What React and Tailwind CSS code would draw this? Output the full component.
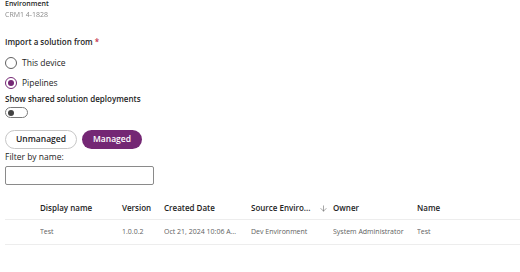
import { ArrowDown } from "lucide-react";

const cols = [
  { label: "Display name", w: "w-[82px]" },
  { label: "Version", w: "w-[42px]" },
  { label: "Created Date", w: "w-[87px]" },
  { label: "Source Enviro...", w: "w-[82px]", sort: true },
  { label: "Owner", w: "w-[84px]" },
  { label: "Name", w: "flex-1" },
];

const row = ["Test", "1.0.0.2", "Oct 21, 2024 10:06 A...", "Dev Environment", "System Administrator", "Test"];

function Radio({ checked, label }) {
  return (
    <div className="flex h-[20px] items-center gap-[5px]">
      <span
        className={
          "flex h-[12px] w-[12px] items-center justify-center rounded-full border " +
          (checked ? "border-[#742774]" : "border-[#616161]")
        }
      >
        {checked && <span className="h-[6px] w-[6px] rounded-full bg-[#742774]" />}
      </span>
      <span className="text-[8.5px] text-[#242424]">{label}</span>
    </div>
  );
}

export default function App() {
  return (
    <div className="h-[272px] w-[520px] overflow-hidden bg-white font-['Open_Sans',sans-serif] text-[#242424]">
      <div className="pl-[5px]">
        <div className="text-[7px] font-semibold leading-[8px]">Environment</div>
        <div className="mt-[2px] text-[7px] leading-[9px] text-[#8a8a8a] blur-[0.6px]">CRM1 4-1828</div>

        <div className="mt-[17px] text-[8px] font-semibold leading-[12px]">
          Import a solution from <span className="text-[#c4314b]">*</span>
        </div>

        <div className="mt-[5px]">
          <Radio label="This device" />
          <Radio checked label="Pipelines" />
        </div>

        <div className="mt-[0px] text-[8px] font-semibold leading-[12px]">Show shared solution deployments</div>
        <div className="mt-[2px] flex h-[11px] w-[23px] items-center rounded-full border border-[#7a7a7a] px-[2px]">
          <span className="h-[6px] w-[6px] rounded-full bg-[#424242]" />
        </div>

        <div className="mt-[12px] flex gap-[5px]">
          <button className="flex h-[19px] w-[72px] items-center justify-center rounded-full border border-[#c7c7c7] bg-white text-[8.5px] font-semibold text-[#242424]">
            Unmanaged
          </button>
          <button className="flex h-[19px] w-[60px] items-center justify-center rounded-full bg-[#742774] text-[8.5px] font-semibold text-white">
            Managed
          </button>
        </div>

        <div className="mt-[2px] text-[8.5px] leading-[12px]">Filter by name:</div>
        <div className="mt-[3px] h-[19px] w-[149px] rounded-[2px] border border-[#8a8a8a]" />

        <div className="mt-[12px]">
          <div className="flex h-[23px] items-center border-b border-[#ededed] pl-[35px] text-[8px] font-semibold">
            {cols.map((c) => (
              <div key={c.label} className={c.w + " flex items-center"}>
                {c.label}
                {c.sort && <ArrowDown size={9} strokeWidth={1.5} className="ml-[9px] text-[#616161]" />}
              </div>
            ))}
          </div>
          <div className="flex h-[25px] items-center border-b border-[#ededed] pl-[35px] text-[7px] text-[#616161]">
            {row.map((v, i) => (
              <div key={i} className={cols[i].w + " truncate pr-[6px]"}>
                {v}
              </div>
            ))}
          </div>
        </div>
      </div>
    </div>
  );
}
